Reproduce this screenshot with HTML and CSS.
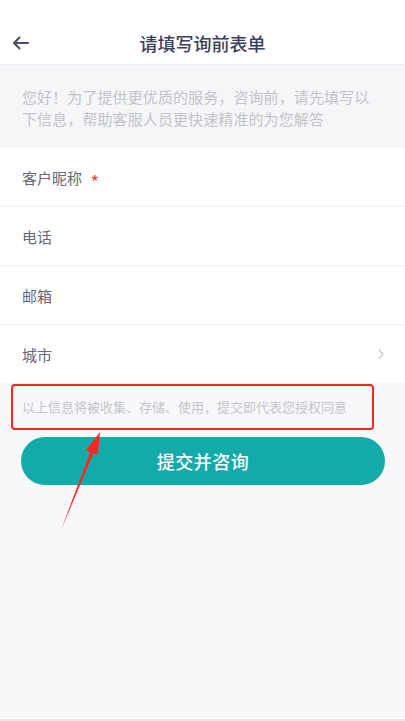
FILE: index.html
```html
<!DOCTYPE html>
<html lang="zh-CN">
<head>
<meta charset="utf-8">
<title>请填写询前表单</title>
<link rel="stylesheet" href="styles.css">
</head>
<body>
<div class="page">
  <header class="header">
    <div class="back">
      <svg width="17" height="14" viewBox="0 0 17 14"><path d="M16 7H2M7.5 1.5L2 7l5.5 5.5" fill="none" stroke="#4a4a6a" stroke-width="2" stroke-linecap="round" stroke-linejoin="round"/></svg>
    </div>
    <h1 class="title">请填写询前表单</h1>
    <div></div>
  </header>
  <p class="intro">您好！为了提供更优质的服务，咨询前，请先填写以下信息，帮助客服人员更快速精准的为您解答</p>
  <div class="form">
    <div class="row"><span class="label">客户昵称<span class="req">*</span></span></div>
    <div class="row"><span class="label">电话</span></div>
    <div class="row"><span class="label">邮箱</span></div>
    <div class="row"><span class="label">城市</span>
      <svg class="chev" width="6" height="10" viewBox="0 0 6 10"><path d="M1 1l4 4-4 4" fill="none" stroke="#c6c6ce" stroke-width="1.3" stroke-linecap="round" stroke-linejoin="round"/></svg>
    </div>
  </div>
  <div class="note">
    <span>以上信息将被收集、存储、使用，提交即代表您授权同意</span>
    <div class="mark-box"></div>
  </div>
  <div class="actions">
    <button class="submit">提交并咨询</button>
  </div>
  <svg class="mark-arrow" width="50" height="106" viewBox="0 0 50 106">
    <polygon points="6,102 38.6,25 35.4,23.8" fill="#ff2626"/>
    <polygon points="45,4 42.8,27 30.8,22.3" fill="#ff2626"/>
  </svg>
</div>
</body>
</html>
```

FILE: styles.css
```css
* { box-sizing: border-box; }
html, body { margin: 0; padding: 0; }
body {
  background: #f8f8fa;
  font-family: "Noto Sans CJK SC", "Noto Sans", sans-serif;
  width: 405px;
  height: 721px;
  overflow: hidden;
}
.page {
  position: relative;
  min-height: 721px;
  border-bottom: 2px solid #e8e8ea;
}
.header {
  height: 65px;
  padding-top: 21px;
  background: #fff;
  border-bottom: 1px solid #efeff3;
  display: grid;
  grid-template-columns: 1fr auto 1fr;
  align-items: center;
}
.back {
  padding-left: 12px;
  display: flex;
  align-items: center;
}
.title {
  margin: 0;
  font-size: 18px;
  font-weight: 500;
  color: #3d3e5c;
  line-height: 44px;
}
.intro {
  margin: 0;
  padding: 21px 32px 18px 22px;
  font-size: 15px;
  line-height: 22px;
  color: #c3c3cb;
  background: #f6f6f9;
  letter-spacing: 0.1px;
}
.form {
  background: #fff;
}
.row {
  height: 59px;
  padding: 0 21px 0 22px;
  display: flex;
  align-items: center;
  justify-content: space-between;
  border-bottom: 1px solid #f1f1f4;
}
.row:last-child { border-bottom: none; height: 58px; }
.label {
  font-size: 15px;
  color: #666778;
  display: flex;
  align-items: center;
}
.req {
  margin-left: 9px;
  color: #f0503f;
  font-size: 15px;
  font-weight: 700;
  line-height: 1;
  position: relative;
  top: 3px;
}
.note {
  position: relative;
  height: 47px;
  padding: 0 22px;
  display: flex;
  align-items: center;
  font-size: 13px;
  color: #c4c4cc;
}
.mark-box {
  position: absolute;
  left: 11px;
  top: 1px;
  width: 363px;
  height: 46px;
  border: 2.5px solid #ff2424;
  border-radius: 4px;
}
.actions {
  padding: 7px 20px 0 21px;
}
.submit {
  display: block;
  width: 100%;
  height: 48px;
  border: none;
  border-radius: 24px;
  background: #13abaa;
  color: #fff;
  font-family: inherit;
  font-size: 18px;
  font-weight: 500;
  letter-spacing: 0.5px;
}
.mark-arrow {
  position: absolute;
  left: 55px;
  top: 428px;
}
```
